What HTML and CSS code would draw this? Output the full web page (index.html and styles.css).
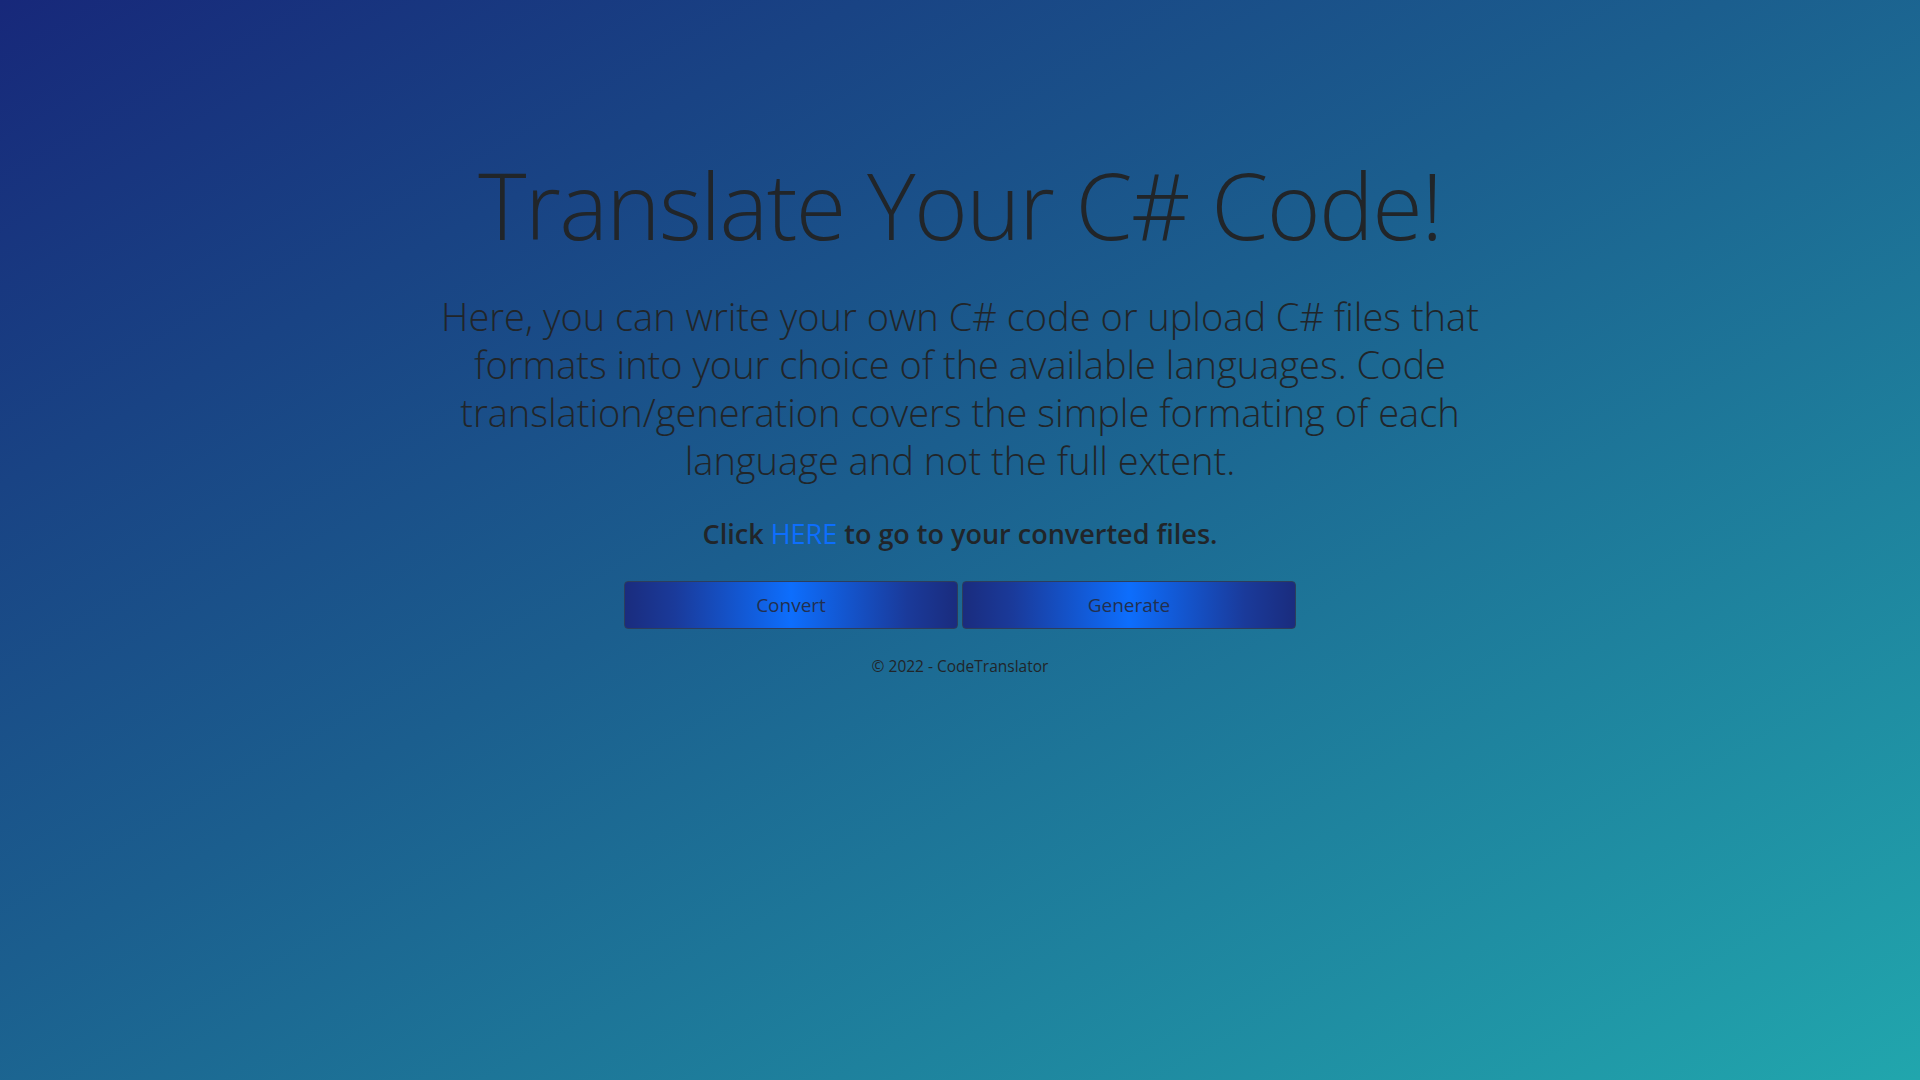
FILE: index.html
```html
<!DOCTYPE html>
<html lang="en">
<head>
<meta charset="utf-8">
<title>CodeTranslator</title>
<link rel="stylesheet" href="styles.css">
</head>
<body>
<main class="page">
  <section class="hero">
    <h1 class="title">Translate Your C# Code!</h1>
    <p class="lead">Here, you can write your own C# code or upload C# files that formats into your choice of the available languages. Code translation/generation covers the simple formating of each language and not the full extent.</p>
    <p class="click">Click <a href="#" class="here">HERE</a> to go to your converted files.</p>
    <div class="actions">
      <button class="btn" type="button">Convert</button>
      <button class="btn" type="button">Generate</button>
    </div>
    <footer class="footer">© 2022 - CodeTranslator</footer>
  </section>
</main>
</body>
</html>
```
FILE: styles.css
```css
html, body {
  margin: 0;
  padding: 0;
  height: 100%;
}
body {
  background: linear-gradient(to bottom right, #17287a 0%, #1b5e8e 45%, #21a6ad 100%);
  color: #212529;
  font-family: "Open Sans", "Noto Sans", sans-serif;
}
.page {
  min-height: 100vh;
  display: flex;
  justify-content: center;
}
.hero {
  width: 1060px;
  padding-top: 150px;
  display: flex;
  flex-direction: column;
  align-items: center;
  text-align: center;
}
.title {
  margin: 0;
  font-size: 92px;
  font-weight: 300;
  line-height: 1.2;
  letter-spacing: -1.6px;
}
.lead {
  margin: 32px 0 0;
  font-size: 38px;
  font-weight: 300;
  line-height: 48px;
}
.click {
  margin: 30px 0 0;
  font-size: 27px;
  font-weight: 600;
  line-height: 40px;
}
.here {
  color: #0d6efd;
  text-decoration: none;
  font-weight: 400;
}
.actions {
  margin-top: 27px;
  display: flex;
  gap: 4px;
}
.btn {
  width: 334px;
  height: 48px;
  border: 1px solid #2c3e5c;
  border-radius: 4px;
  background: linear-gradient(to right, #1a2c7e 0%, #1a3a9a 15%, #0d6efd 50%, #1a3a9a 85%, #1a2c7e 100%);
  color: #22304f;
  font-family: "Open Sans", "Noto Sans", sans-serif;
  font-size: 19px;
  font-weight: 400;
  padding: 0;
}
.footer {
  margin-top: 25px;
  font-size: 15.5px;
  line-height: 24px;
  color: #212529;
}
```
